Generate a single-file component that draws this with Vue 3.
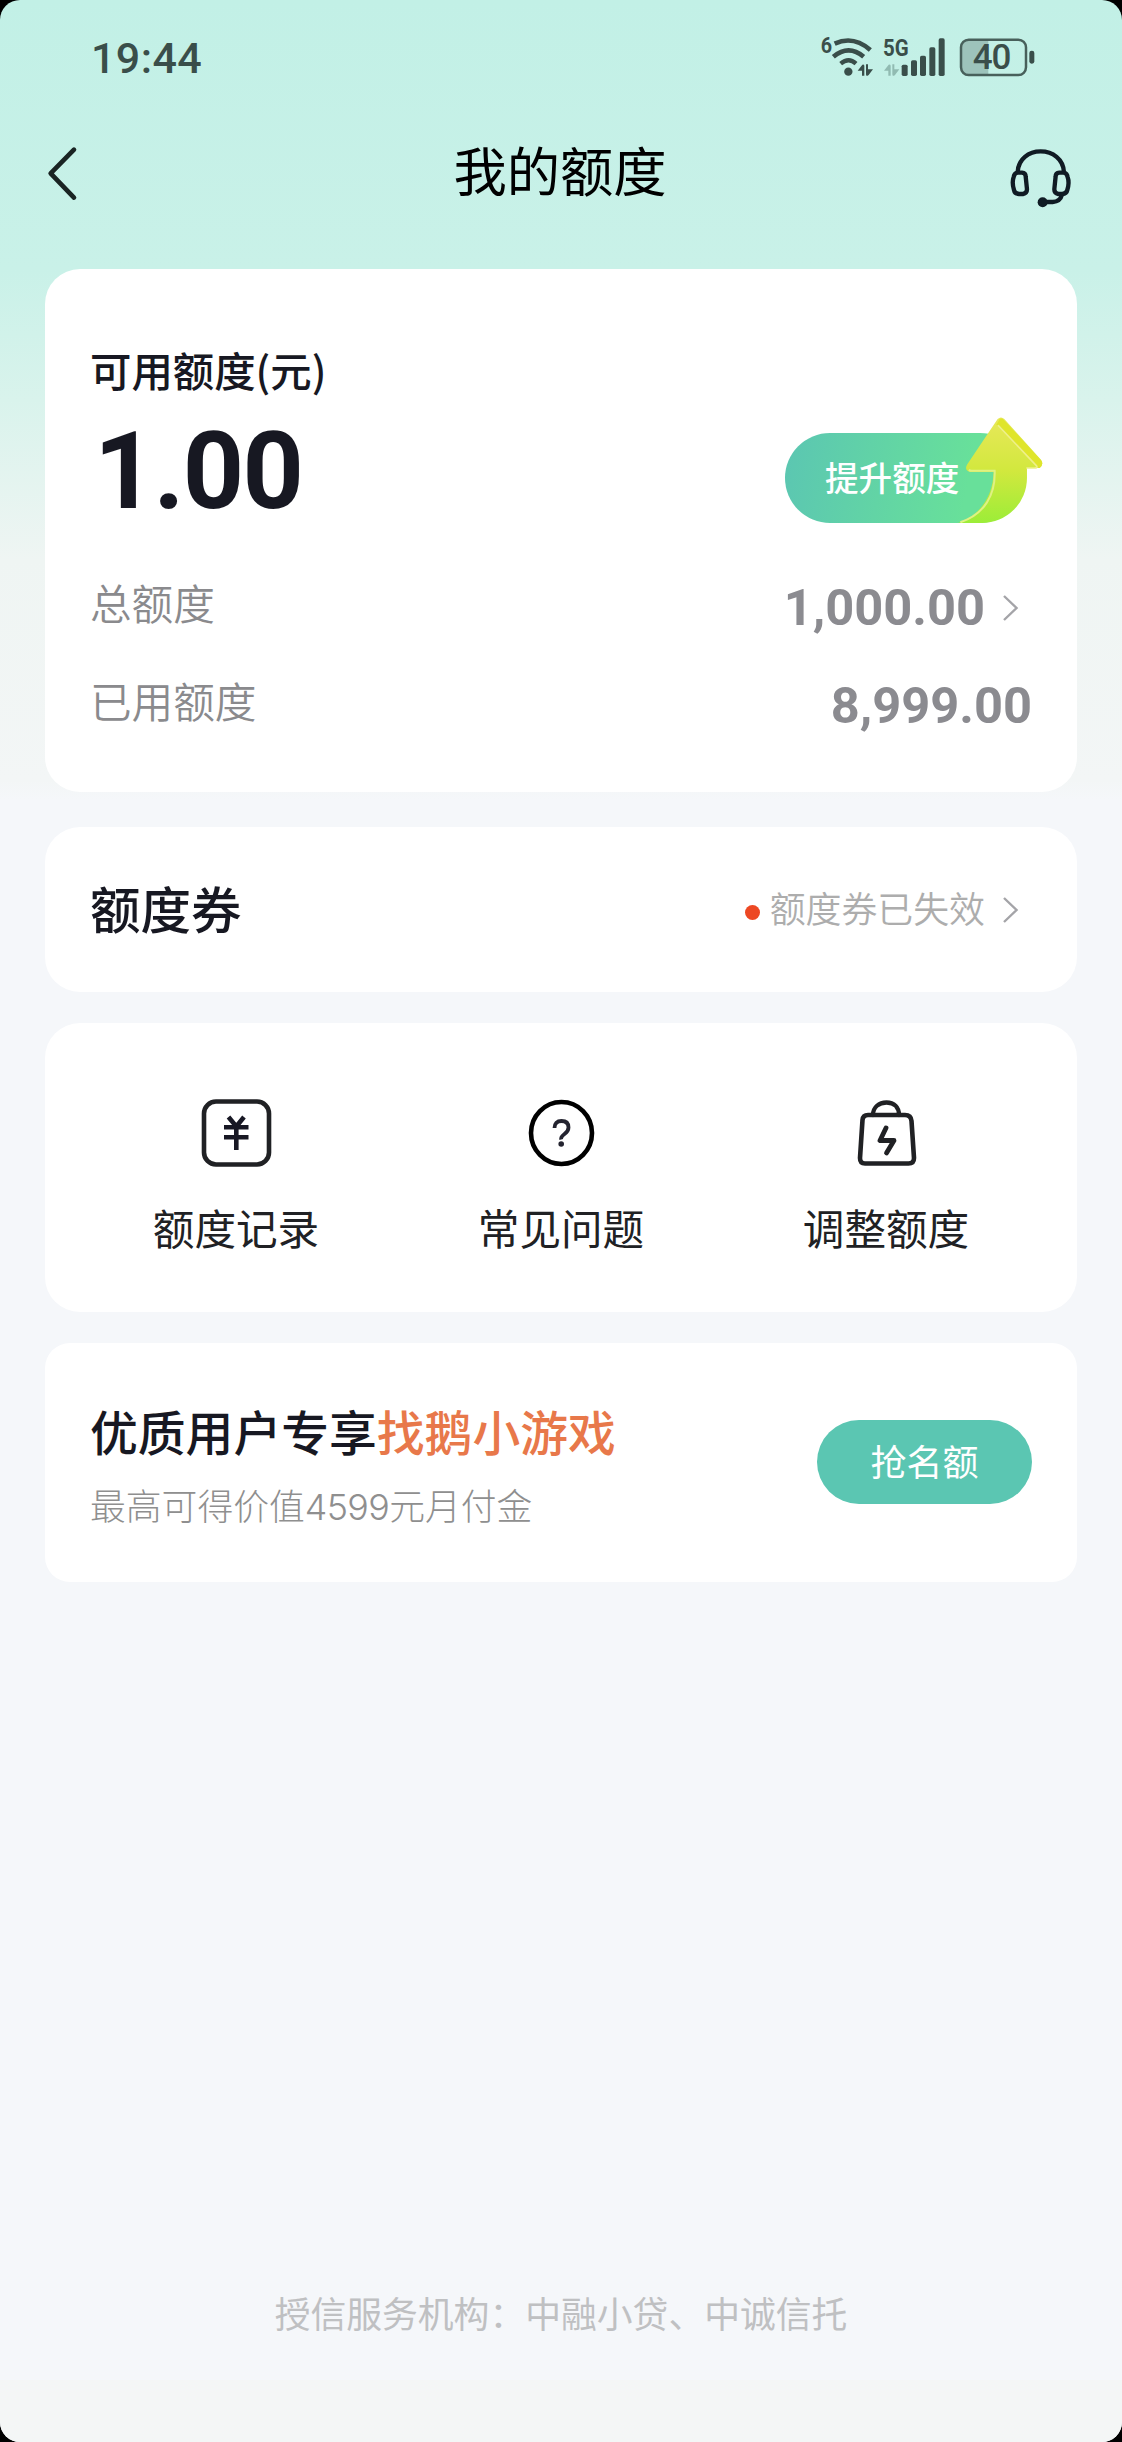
<script setup>
const shortcuts = [
  { icon: 'record', label: '额度记录' },
  { icon: 'help', label: '常见问题' },
  { icon: 'adjust', label: '调整额度' },
]
</script>

<template>
  <div class="device">
    <div class="screen">
      <div class="status">
        <span class="clock">19:44</span>
        <svg class="status-icons" viewBox="110 100 660 140">
          <g fill="none" stroke="#3a4e4a" stroke-linecap="butt">
            <path d="M163 132Q219 106 270 151" stroke-width="14" />
            <path d="M159 171Q205 133 250 171" stroke-width="14" />
            <path d="M181 192Q205 172 227 192" stroke-width="13" />
          </g>
          <g fill="#3a4e4a">
            <text x="121" y="160" font-size="66" font-weight="700" textLength="34" lengthAdjust="spacingAndGlyphs">6</text>
            <circle cx="204" cy="216" r="12.5" />
            <path d="M232 213 246 195Q252 192 252 199V228H245V213ZM257 194H263V209H278L265 226Q257 232 257 224Z" />
            <text x="308" y="168" font-size="70" font-weight="700" textLength="77" lengthAdjust="spacingAndGlyphs">5G</text>
            <rect x="364" y="195" width="18" height="34" rx="5" />
            <rect x="392" y="182" width="18" height="47" rx="5" />
            <rect x="419" y="168" width="18" height="61" rx="5" />
            <rect x="447" y="143" width="18" height="86" rx="5" />
            <rect x="475" y="116" width="18" height="113" rx="5" />
            <rect x="747" y="153" width="15" height="39" rx="7" />
          </g>
          <path fill="#91bbb2" d="M311 213 325 195Q331 192 331 199V228H324V213ZM336 194H342V209H357L344 226Q336 232 336 224Z" />
          <path fill="#9dc3bb" d="M624 120H564Q542 120 542 142V203Q542 225 564 225H624Z" />
          <rect x="542" y="120" width="195" height="106" rx="23" fill="none" stroke="#48605b" stroke-width="7.5" />
          <text x="577" y="209" font-size="105" font-weight="500" fill="#3a4e4a" textLength="116">40</text>
        </svg>
      </div>

      <header class="navbar">
        <svg class="back" viewBox="140 436 100 170">
          <path d="M224 450 154 521 224 594" fill="none" stroke="#1a2423" stroke-width="14" stroke-linecap="round" stroke-linejoin="round" />
        </svg>
        <h1>我的额度</h1>
        <svg class="headset" viewBox="688 440 190 186">
          <g fill="none" stroke="#101b24" stroke-width="13" stroke-linecap="round">
            <path d="M714 515C716 476 747 453 783 453S851 476 853 515" />
            <path d="M713 517H727Q738 518 738 528L742 567Q742 579 730 581H718Q705 580 703 569Q696 547 702 530Q704 519 713 517Z" />
            <path d="M853 517H839Q828 518 828 528L824 567Q824 579 836 581H848Q861 580 863 569Q870 547 864 530Q862 519 853 517Z" />
            <path d="M847 583Q842 603 819 605H791" />
          </g>
          <circle cx="789" cy="606" r="15" fill="#101b24" />
        </svg>
      </header>

      <main>
        <section class="card quota">
          <div class="caption">可用额度(元)</div>
          <div class="available">
            <strong>1.00</strong>
            <div class="boost">
              <span>提升额度</span>
              <svg class="arrow" viewBox="655 45 265 325">
                <defs>
                  <linearGradient id="arrowFill" x1="0" y1="0" x2="0" y2="1">
                    <stop offset="0" stop-color="#e8e85a" />
                    <stop offset=".5" stop-color="#d2e83e" />
                    <stop offset="1" stop-color="#9ced38" />
                  </linearGradient>
                </defs>
                <path d="M774 57Q784 48 794 57L904 179Q914 193 900 204H862V234A135 135 0 0 1 727 369H655C720 347 760 290 762 216H692Q672 210 683 193Z" fill="url(#arrowFill)" />
                <path d="M780 58Q784 53 792 59L904 181Q913 193 900 204L890 201 770 74Z" fill="#dfe52b" />
                <path d="M776 77 890 197Q896 204 884 204H862" fill="none" stroke="#edf08a" stroke-width="5" stroke-linecap="round" />
                <path d="M687 210Q693 213 700 212H765C768 284 735 342 662 367" fill="none" stroke="#dff184" stroke-width="6" />
              </svg>
            </div>
          </div>
          <div class="row total">
            <span>总额度</span>
            <span class="value">
              <b>1,000.00</b>
              <svg class="chevron" viewBox="0 0 17 28"><path d="M2 2 14.5 14 2 26" /></svg>
            </span>
          </div>
          <div class="row used">
            <span>已用额度</span>
            <span class="value"><b>8,999.00</b></span>
          </div>
        </section>

        <section class="card coupon">
          <h2>额度券</h2>
          <div class="state">
            <i class="dot"></i>
            <span>额度券已失效</span>
            <svg class="chevron" viewBox="0 0 17 28"><path d="M2 2 14.5 14 2 26" /></svg>
          </div>
        </section>

        <section class="card shortcuts">
          <div v-for="s in shortcuts" :key="s.icon" class="shortcut">
            <svg viewBox="0 0 72 72" fill="none" stroke="#202124" stroke-width="4.6" stroke-linecap="round" stroke-linejoin="round">
              <template v-if="s.icon === 'record'">
                <rect x="4" y="4.5" width="65" height="63" rx="12" />
                <g stroke="#181824" stroke-linecap="butt">
                  <path d="M28.5 20 36.3 29.5 44 20M36.3 29V53" />
                  <path d="M24 30.3H48.500M24 40.3H48.500" />
                </g>
              </template>
              <template v-else-if="s.icon === 'help'">
                <ellipse cx="36.500" cy="36" rx="30.5" ry="31" stroke="#000" />
                <path d="M29.500 31Q29.500 24 36.500 24T43.500 30.5Q43.500 34 39.5 37T36.200 42.5" stroke="#242430" stroke-width="3.8" stroke-linecap="butt" />
                <circle cx="36.200" cy="47" r="2.8" fill="#242430" stroke="none" />
              </template>
              <template v-else>
                <path d="M23 18C23 10 29 5.5 36.5 5.5S49 10 49 18" stroke-width="4.3" />
                <path d="M18 18H55Q61 18 61.5 24L64 61Q64 66.500 58.500 66.500H15Q10 66.500 10 61L12.500 23Q13 18 18 18Z" stroke-width="4.600" />
                <path d="M36 31 30 43.500H44L36.500 56" stroke-width="4.800" />
              </template>
            </svg>
            <span>{{ s.label }}</span>
          </div>
        </section>

        <section class="card promo">
          <div class="copy">
            <h3>优质用户专享<em>找鹅小游戏</em></h3>
            <p>最高可得价值<span class="num">4599</span>元月付金</p>
          </div>
          <button>抢名额</button>
        </section>
      </main>

      <footer>授信服务机构：中融小贷、中诚信托</footer>
      <div class="gesture"></div>
    </div>
  </div>
</template>

<style>
body {
  background: #000;
}
</style>

<style scoped>
* {
  box-sizing: border-box;
}
.device {
  width: 1122px;
  height: 2442px;
  background: #000;
  font-family: "Noto Sans CJK SC", sans-serif;
}
.screen {
  display: flex;
  flex-direction: column;
  height: 2442px;
  overflow: hidden;
  border-radius: 20px;
  background: linear-gradient(#c2f0e6 0, #c9f1e8 270px, #d9f3ec 400px, #eff5f3 560px, #f3f6f6 780px, #f5f7fa 800px);
}
.status {
  display: flex;
  justify-content: space-between;
  height: 115px;
  padding: 33px 85px 0 91px;
}
.clock {
  height: 50px;
  color: #3a4e4a;
  font: 500 43px/50px Roboto, sans-serif;
  letter-spacing: 0.4px;
}
.status-icons {
  width: 220px;
  height: 46.7px;
  font-family: Roboto, sans-serif;
}
.navbar {
  display: flex;
  justify-content: space-between;
  height: 154px;
  padding: 30px 50px 0 46px;
}
.back {
  width: 33.3px;
  height: 56.7px;
}
.headset {
  width: 63.3px;
  height: 62px;
  margin: 2px 0 0 -30px;
}
h1 {
  height: 52px;
  margin: -2px 0 0 2px;
  color: #000;
  font-size: 53.3px;
  font-weight: 400;
  line-height: 52px;
}
main {
  display: flex;
  flex-direction: column;
  padding: 0 45px;
}
.card {
  border-radius: 35px;
  background: #fff;
}
.quota {
  height: 523px;
  padding: 70px 45px 0;
}
.caption {
  height: 60px;
  color: #171822;
  font-size: 41.4px;
  font-weight: 500;
  line-height: 60px;
}
.available {
  display: flex;
  justify-content: space-between;
  height: 156px;
}
.available strong {
  margin: 10px 0 0 4px;
  color: #171822;
  font: 700 107px/126px Roboto, sans-serif;
  letter-spacing: -1.8px;
}
.boost {
  position: relative;
  width: 240px;
  height: 90px;
  margin: 34px 7px 0 0;
  padding-left: 40px;
  border-radius: 45px;
  background: linear-gradient(100deg, #5bc6b2, #68e09a 75%);
  color: #fff;
  font-size: 33.6px;
  font-weight: 500;
  line-height: 87px;
}
.arrow {
  position: absolute;
  top: -18px;
  left: 173.3px;
  width: 88.3px;
  height: 108.3px;
}
.row {
  display: flex;
  align-items: center;
  justify-content: space-between;
  height: 98px;
  color: #8a8a8d;
  font-size: 41.6px;
  font-weight: 350;
  line-height: 60px;
}
.row > span:first-child {
  margin-top: -5px;
}
.row b {
  color: #8b8b90;
  font: 700 50.6px/60px Roboto, sans-serif;
}
.value,
.state {
  display: flex;
  align-items: center;
}
.value {
  margin-top: 7px;
}
.chevron {
  width: 17px;
  height: 28px;
  margin: 0 13px 0 17px;
  fill: none;
  stroke: #a4a4a8;
  stroke-width: 2.4;
}
.coupon {
  display: flex;
  align-items: center;
  justify-content: space-between;
  height: 165px;
  margin-top: 35px;
  padding: 0 45px;
}
h2 {
  margin: -5px 0 0;
  color: #171822;
  font-size: 50.5px;
  font-weight: 500;
  line-height: 70px;
}
.state {
  color: #adadad;
  font-size: 35.9px;
  font-weight: 350;
  line-height: 50px;
}
.state span {
  margin-top: -5px;
}
.dot {
  width: 15px;
  height: 15px;
  margin: 5px 10px 0 0;
  border-radius: 50%;
  background: #ed4823;
}
.shortcuts {
  display: flex;
  height: 289px;
  margin-top: 31px;
  padding: 74px 28.5px 0;
}
.shortcut {
  display: flex;
  flex: 1;
  flex-direction: column;
  align-items: center;
  color: #202124;
  font-size: 41.6px;
  line-height: 60px;
}
.shortcut svg {
  width: 72px;
  height: 72px;
  margin-bottom: 28px;
}
.promo {
  display: flex;
  justify-content: space-between;
  height: 239px;
  margin-top: 31px;
  padding: 58px 45px 0;
  border-radius: 25px;
}
h3 {
  margin: 0;
  color: #171822;
  font-size: 47.8px;
  font-weight: 500;
  line-height: 60px;
}
em {
  color: #e8784a;
  font-style: normal;
}
.promo p {
  margin: 18px 0 0;
  color: #8f8f8f;
  font-size: 35.8px;
  font-weight: 300;
  line-height: 50px;
}
.num {
  font-family: Inter, "Liberation Sans", sans-serif;
  font-weight: 300;
  letter-spacing: -0.6px;
}
button {
  width: 215px;
  height: 84px;
  margin-top: 19px;
  padding: 0 0 3px;
  border: 0;
  border-radius: 42px;
  background: #5bc6b2;
  color: #fff;
  font: 400 36px/81px "Noto Sans CJK SC", sans-serif;
}
footer {
  margin-top: auto;
  padding-bottom: 43px;
  color: #bfc0c2;
  font-size: 35.8px;
  line-height: 50px;
  text-align: center;
}
.gesture {
  height: 62px;
  background: #f4f6f6;
}
</style>
